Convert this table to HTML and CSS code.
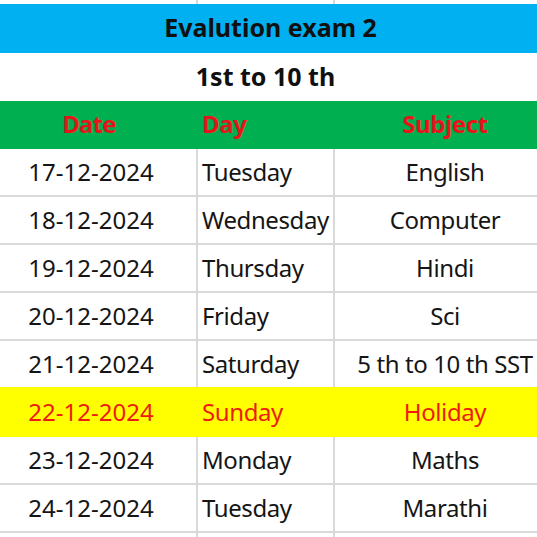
FILE: index.html
```html
<!DOCTYPE html>
<html>
<head>
<meta charset="utf-8">
<link rel="stylesheet" href="styles.css">
</head>
<body>
<table class="sheet">
  <colgroup>
    <col class="c-date">
    <col class="c-day">
    <col class="c-subj">
  </colgroup>
  <tr class="strip"><td></td><td></td><td></td></tr>
  <tr class="title"><td colspan="3">Evalution exam 2</td></tr>
  <tr class="subtitle"><td colspan="3">1st to 10 th</td></tr>
  <tr class="head"><td class="center">Date</td><td class="left">Day</td><td class="center">Subject</td></tr>
  <tr><td class="center">17-12-2024</td><td class="left">Tuesday</td><td class="center">English</td></tr>
  <tr><td class="center">18-12-2024</td><td class="left">Wednesday</td><td class="center">Computer</td></tr>
  <tr><td class="center">19-12-2024</td><td class="left">Thursday</td><td class="center">Hindi</td></tr>
  <tr><td class="center">20-12-2024</td><td class="left">Friday</td><td class="center">Sci</td></tr>
  <tr class="pre-fill"><td class="center">21-12-2024</td><td class="left">Saturday</td><td class="center">5 th to 10 th SST</td></tr>
  <tr class="holiday"><td class="center">22-12-2024</td><td class="left">Sunday</td><td class="center">Holiday</td></tr>
  <tr><td class="center">23-12-2024</td><td class="left">Monday</td><td class="center">Maths</td></tr>
  <tr><td class="center">24-12-2024</td><td class="left">Tuesday</td><td class="center">Marathi</td></tr>
  <tr class="tail"><td></td><td></td><td></td></tr>
</table>
</body>
</html>
```
FILE: styles.css
```css
html, body {
  margin: 0;
  padding: 0;
  background: #ffffff;
  overflow: hidden;
  width: 537px;
  height: 537px;
}
.sheet {
  margin-left: -14px;
  border-collapse: collapse;
  table-layout: fixed;
  width: 570px;
  font-family: "Noto Sans", "Open Sans", sans-serif;
  font-size: 24px;
  color: #151515;
}
.c-date { width: 211px; }
.c-day { width: 137px; }
.c-subj { width: 222px; }
.sheet td {
  height: 48px;
  padding: 0;
  box-sizing: border-box;
  border-right: 2px solid #d9d9d9;
  border-bottom: 2px solid #d9d9d9;
  vertical-align: middle;
  white-space: nowrap;
  overflow: visible;
  line-height: 1;
}
.sheet .strip td {
  height: 4px;
  border-bottom: none;
}
.sheet .tail td {
  height: 5px;
  border-bottom: none;
}
.center { text-align: center; }
.left {
  text-align: left;
  padding-left: 4px !important;
  letter-spacing: -0.4px;
}
.c-subj, .sheet td:nth-child(3) { letter-spacing: -0.4px; }
.title td {
  background: #00b0f0;
  border-color: #00b0f0;
  font-weight: 700;
  font-size: 25px;
  text-align: center;
  color: #101010;
  letter-spacing: 0;
}
.subtitle td {
  background: #ffffff;
  border-color: #ffffff;
  font-weight: 700;
  font-size: 25px;
  text-align: center;
  color: #101010;
  padding-right: 10px;
  letter-spacing: 0;
}
.head td {
  background: #00b050;
  border-color: #00b050;
  font-weight: 700;
  color: #e8141a;
  letter-spacing: -0.4px;
}
.head td:first-child { padding-right: 4px; letter-spacing: -0.8px; }
.pre-fill td {
  border-bottom-color: #ffff00;
}
.holiday td {
  background: #ffff00;
  border-color: #ffff00;
  color: #ee1c10;
}
```
